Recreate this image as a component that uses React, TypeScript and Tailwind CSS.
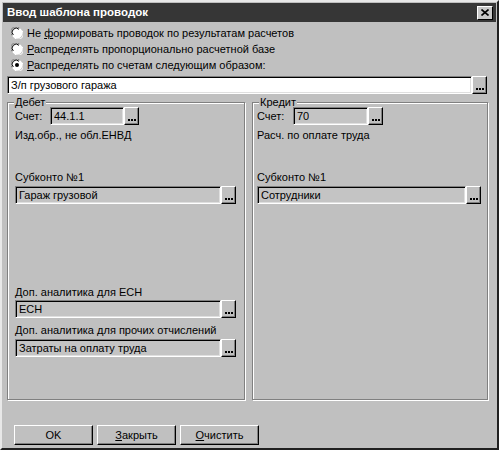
import type { ReactNode } from 'react';

const font = { fontFamily: '"Liberation Sans", Arial, sans-serif' };

function Radio({ checked }: { checked?: boolean }) {
  return (
    <svg width="12" height="12" viewBox="0 0 12 12" className="shrink-0">
      <circle cx="6" cy="6" r="5.5" fill="#ffffff" />
      <path d="M1.2 8.5 A5 5 0 0 1 8.5 1.2" stroke="#808080" strokeWidth="1" fill="none" />
      <path d="M2.3 8 A4 4 0 0 1 8 2.3" stroke="#000000" strokeWidth="1" fill="none" />
      <path d="M3.5 10.8 A5 5 0 0 0 10.8 3.5" stroke="#ffffff" strokeWidth="1" fill="none" />
      {checked && <circle cx="6" cy="6" r="2" fill="#000000" />}
    </svg>
  );
}

function DotsButton() {
  return (
    <div className="flex h-full w-[15px] shrink-0 items-end justify-center border border-b-black border-l-white border-r-black border-t-white bg-[#c0c0c0] pb-[3px] shadow-[inset_-1px_-1px_0_#808080]">
      <svg width="8" height="2" viewBox="0 0 8 2">
        <rect x="0" y="0" width="2" height="2" fill="#000" />
        <rect x="3" y="0" width="2" height="2" fill="#000" />
        <rect x="6" y="0" width="2" height="2" fill="#000" />
      </svg>
    </div>
  );
}

function Field({
  value,
  white,
  className,
}: {
  value: string;
  white?: boolean;
  className?: string;
}) {
  return (
    <div className={`flex h-[18px] ${className ?? ''}`}>
      <div
        className={`flex min-w-0 flex-1 items-center border border-b-white border-l-[#808080] border-r-white border-t-[#808080] pl-[3px] shadow-[inset_1px_1px_0_#000,inset_-1px_-1px_0_#dfdfdf] ${
          white ? 'bg-white' : 'bg-[#c4c4c4]'
        }`}
      >
        <span className="truncate text-[11px] leading-none text-black">{value}</span>
      </div>
      <DotsButton />
    </div>
  );
}

function Group({ title, children }: { title: string; children: ReactNode }) {
  return (
    <fieldset className="h-[304px] border border-[#808080] shadow-[inset_1px_1px_0_#fff,1px_1px_0_#fff]">
      <legend className="ml-[6px] bg-[#c0c0c0] px-[1px] text-[11px] leading-[13px] text-black">
        {title}
      </legend>
      {children}
    </fieldset>
  );
}

function WinButton({ children }: { children: ReactNode }) {
  return (
    <div className="flex h-[20px] w-[79px] items-center justify-center border border-b-black border-l-white border-r-black border-t-white bg-[#c0c0c0] text-[11px] text-black shadow-[inset_-1px_-1px_0_#808080]">
      {children}
    </div>
  );
}

export default function App() {
  return (
    <div
      style={font}
      className="flex h-[450px] w-[499px] flex-col border-2 border-b-[#202020] border-l-[#e8e8e8] border-r-[#202020] border-t-[#e8e8e8] bg-[#c0c0c0] text-black"
    >
      <div className="mx-[1px] mt-[1px] flex h-[19px] items-center justify-between bg-[#363636] pl-[4px] pr-[3px]">
        <span className="text-[11.5px] font-bold text-white">Ввод шаблона проводок</span>
        <div className="flex h-[14px] w-[16px] items-center justify-center border border-b-black border-l-white border-r-black border-t-white bg-[#c8c8c8]">
          <svg width="8" height="7" viewBox="0 0 8 7">
            <path d="M0.5 0.5 L7.5 6.5 M7.5 0.5 L0.5 6.5" stroke="#000" strokeWidth="1.6" />
          </svg>
        </div>
      </div>

      <div className="flex flex-col px-[5px] pt-[3px]">
        <div className="flex h-[16px] items-center gap-[4px] pl-[4px] text-[11px]">
          <Radio />
          <span>
            Не <u>ф</u>ормировать проводок по результатам расчетов
          </span>
        </div>
        <div className="flex h-[16px] items-center gap-[4px] pl-[4px] text-[11px]">
          <Radio />
          <span>
            <u>Р</u>аспределять пропорционально расчетной базе
          </span>
        </div>
        <div className="flex h-[16px] items-center gap-[4px] pl-[4px] text-[11px]">
          <Radio checked />
          <span>
            <u>Р</u>аспределять по счетам следующим образом:
          </span>
        </div>

        <Field value="З/п грузового гаража" white className="mt-[3px] mr-[5px]" />

        <div className="mt-[2px] grid grid-cols-[238px_236px] gap-[7px]">
          <Group title="Дебет">
            <div className="flex flex-col pl-[7px] pr-[8px] text-[11px]">
              <div className="mt-[-2px] flex h-[18px] items-center">
                <span className="w-[35px]">Счет:</span>
                <Field value="44.1.1" className="w-[89px]" />
              </div>
              <div className="mt-[3px] h-[14px] leading-[14px]">Изд.обр., не обл.ЕНВД</div>
              <div className="mt-[28px] h-[14px] leading-[14px]">Субконто №1</div>
              <Field value="Гараж грузовой" className="mt-[2px]" />
              <div className="mt-[81px] h-[14px] leading-[14px]">Доп. аналитика для ЕСН</div>
              <Field value="ЕСН" className="mt-[1px]" />
              <div className="mt-[5px] h-[14px] leading-[14px]">Доп. аналитика для прочих отчислений</div>
              <Field value="Затраты на оплату труда" className="mt-[2px]" />
            </div>
          </Group>
          <Group title="Кредит">
            <div className="flex flex-col pl-[4px] pr-[6px] text-[11px]">
              <div className="mt-[-2px] flex h-[18px] items-center">
                <span className="w-[36px]">Счет:</span>
                <Field value="70" className="w-[90px]" />
              </div>
              <div className="mt-[3px] h-[14px] leading-[14px]">Расч. по оплате труда</div>
              <div className="mt-[28px] h-[14px] leading-[14px]">Субконто №1</div>
              <Field value="Сотрудники" className="mt-[2px]" />
            </div>
          </Group>
        </div>

        <div className="mt-[25px] flex gap-[4px] pl-[7px]">
          <WinButton>OK</WinButton>
          <WinButton>
            <span>
              <u>З</u>акрыть
            </span>
          </WinButton>
          <WinButton>
            <span>
              <u>О</u>чистить
            </span>
          </WinButton>
        </div>
      </div>
    </div>
  );
}
